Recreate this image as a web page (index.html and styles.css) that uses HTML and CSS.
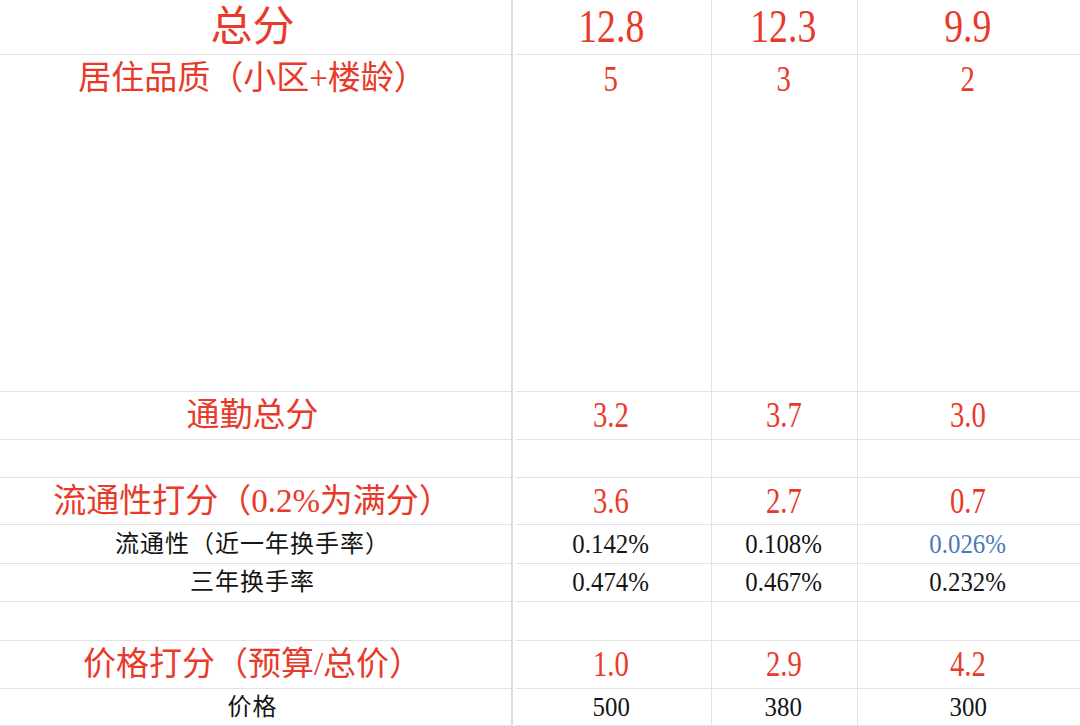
FILE: index.html
```html
<!DOCTYPE html>
<html lang="zh">
<head>
<meta charset="utf-8">
<title>打分表</title>
<link rel="stylesheet" href="styles.css">
</head>
<body>
<div class="sheet">
  <div class="divider"></div>

  <div class="cell label big r1">总分</div>
  <div class="cell num c2 r1"><span class="n xl red">12.8</span></div>
  <div class="cell num c3 r1"><span class="n xl red">12.3</span></div>
  <div class="cell num c4 r1"><span class="n xl red">9.9</span></div>

  <div class="cell label top red mid">居住品质（小区+楼龄）</div>
  <div class="cell num top c2"><span class="n lg red">5</span></div>
  <div class="cell num top c3"><span class="n lg red">3</span></div>
  <div class="cell num top c4"><span class="n lg red">2</span></div>

  <div class="cell label red mid">通勤总分</div>
  <div class="cell num c2"><span class="n lg red">3.2</span></div>
  <div class="cell num c3"><span class="n lg red">3.7</span></div>
  <div class="cell num c4"><span class="n lg red">3.0</span></div>

  <div class="cell label"></div>
  <div class="cell num c2"></div>
  <div class="cell num c3"></div>
  <div class="cell num c4"></div>

  <div class="cell label red mid">流通性打分（0.2%为满分）</div>
  <div class="cell num c2"><span class="n lg red">3.6</span></div>
  <div class="cell num c3"><span class="n lg red">2.7</span></div>
  <div class="cell num c4"><span class="n lg red">0.7</span></div>

  <div class="cell label small">流通性（近一年换手率）</div>
  <div class="cell num c2"><span class="n sm">0.142%</span></div>
  <div class="cell num c3"><span class="n sm">0.108%</span></div>
  <div class="cell num c4"><span class="n sm blue">0.026%</span></div>

  <div class="cell label small">三年换手率</div>
  <div class="cell num c2"><span class="n sm">0.474%</span></div>
  <div class="cell num c3"><span class="n sm">0.467%</span></div>
  <div class="cell num c4"><span class="n sm">0.232%</span></div>

  <div class="cell label"></div>
  <div class="cell num c2"></div>
  <div class="cell num c3"></div>
  <div class="cell num c4"></div>

  <div class="cell label red mid">价格打分（预算/总价）</div>
  <div class="cell num c2"><span class="n lg red">1.0</span></div>
  <div class="cell num c3"><span class="n lg red">2.9</span></div>
  <div class="cell num c4"><span class="n lg red">4.2</span></div>

  <div class="cell label small">价格</div>
  <div class="cell num c2"><span class="n sm">500</span></div>
  <div class="cell num c3"><span class="n sm">380</span></div>
  <div class="cell num c4"><span class="n sm">300</span></div>
</div>
</body>
</html>
```

FILE: styles.css
```css
* { box-sizing: border-box; }
html, body {
  margin: 0;
  padding: 0;
  background: #ffffff;
}
body {
  width: 1080px;
  height: 726px;
  overflow: hidden;
  font-family: "Liberation Serif", "Noto Sans CJK SC", serif;
  color: #151515;
}
.sheet {
  display: grid;
  grid-template-columns: 511px 4px 197px 146px 222px;
  grid-template-rows: 55px 337px 48px 38px 47px 39px 38px 39px 48px 37px;
  width: 1080px;
}
.divider {
  grid-column: 2;
  grid-row: 1 / -1;
  border-left: 2px solid #dcdcde;
}
.cell {
  display: flex;
  align-items: center;
  justify-content: center;
  border-bottom: 1px solid #e2e2e4;
  white-space: nowrap;
  line-height: 1;
}
.label {
  grid-column: 1;
  padding-right: 6px;
}
.c2 { grid-column: 3; border-right: 1px solid #e2e2e4; padding-right: 4px; }
.c3 { grid-column: 4; border-right: 1px solid #e2e2e4; padding-right: 2px; }
.c4 { grid-column: 5; padding-right: 2px; }
.top {
  align-items: flex-start;
  padding-top: 7px;
}
.red { color: #e83a2a; }
.blue { color: #4a78bd; }
.big {
  color: #e83a2a;
  font-size: 42px;
}
.mid {
  font-size: 33px;
}
.small {
  font-size: 24px;
  letter-spacing: 1px;
  padding-bottom: 1px;
}
.n {
  display: inline-block;
  transform: scaleX(0.82);
}
.xl { font-size: 46px; }
.lg { font-size: 35px; }
.sm {
  font-size: 27px;
  transform: scaleX(0.92);
}
```
